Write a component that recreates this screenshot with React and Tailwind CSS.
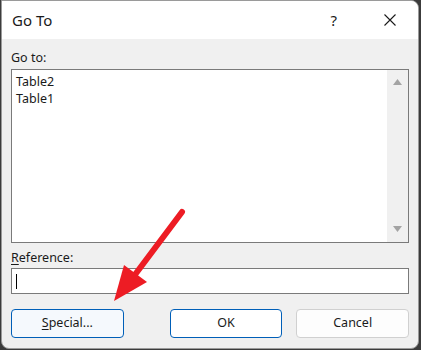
export default function App() {
  return (
    <div
      className="relative w-[421px] h-[350px] bg-[#3c3c3c] overflow-hidden"
      style={{ fontFamily: '"Noto Sans", "Open Sans", Arial, sans-serif' }}
    >
      <div className="absolute left-[1px] top-0 w-[418px] h-[349px] bg-[#f0f0f0] border border-[#9a9a9a] rounded-tr-[8px] rounded-b-[8px] overflow-hidden flex flex-col">
        {/* title bar */}
        <div className="h-[38px] bg-white flex items-center shrink-0">
          <div className="ml-[10px] text-[15px] text-[#1a1a1a] leading-none">Go To</div>
          <div className="ml-auto mr-[47px] text-[15px] text-[#1a1a1a] leading-none">?</div>
          <svg width="12" height="12" viewBox="0 0 12 12" className="mr-[22px]">
            <path d="M0.5 0.5 L11.5 11.5 M11.5 0.5 L0.5 11.5" stroke="#1a1a1a" strokeWidth="1.1" />
          </svg>
        </div>

        {/* body */}
        <div className="flex flex-col px-[9px] pt-[11px]">
          <div className="text-[12.5px] leading-[16px] text-[#1a1a1a]">Go to:</div>
          <div className="mt-[3px] h-[174px] bg-white border border-[#7a7a7a] flex">
            <div className="flex-1 pl-[4px] pt-[3px] text-[12.5px] leading-[17px] text-[#1a1a1a]">
              <div>Table2</div>
              <div>Table1</div>
            </div>
            <div className="w-[21px] bg-[#f0f0f0] flex flex-col items-center justify-between pt-[9px] pb-[10px]">
              <svg width="9" height="6" viewBox="0 0 9 6">
                <path d="M4.5 0 L9 6 L0 6 Z" fill="#a3a3a3" />
              </svg>
              <svg width="9" height="6" viewBox="0 0 9 6">
                <path d="M0 0 L9 0 L4.5 6 Z" fill="#a3a3a3" />
              </svg>
            </div>
          </div>

          <div className="mt-[7px] text-[12.5px] leading-[16px] text-[#1a1a1a]">
            <span className="underline underline-offset-2">R</span>eference:
          </div>
          <div className="mt-[2px] h-[26px] bg-white border border-[#7a7a7a] flex items-center pl-[4px]">
            <div className="w-px h-[15px] bg-black" />
          </div>

          <div className="mt-[15px] flex items-center">
            <button className="w-[113px] h-[29px] rounded-[4px] border border-[#005fb8] bg-[#f5f9fd] text-[12.5px] text-[#1a1a1a]">
              <span className="underline underline-offset-2">S</span>pecial...
            </button>
            <button className="ml-[46px] w-[113px] h-[29px] rounded-[4px] border border-[#005fb8] bg-white text-[12.5px] text-[#1a1a1a]">
              OK
            </button>
            <button className="ml-[14px] w-[113px] h-[29px] rounded-[4px] border border-[#d0d0d0] bg-[#fdfdfd] text-[12.5px] text-[#1a1a1a]">
              Cancel
            </button>
          </div>
        </div>
      </div>

      {/* red annotation arrow */}
      <svg className="absolute left-0 top-0 pointer-events-none" width="421" height="350" viewBox="0 0 421 350">
        <line x1="182" y1="212" x2="134" y2="276" stroke="#ed1c24" strokeWidth="6" strokeLinecap="round" />
        <path d="M124 265 L147 282 L114 301 Z" fill="#ed1c24" />
      </svg>
    </div>
  );
}
